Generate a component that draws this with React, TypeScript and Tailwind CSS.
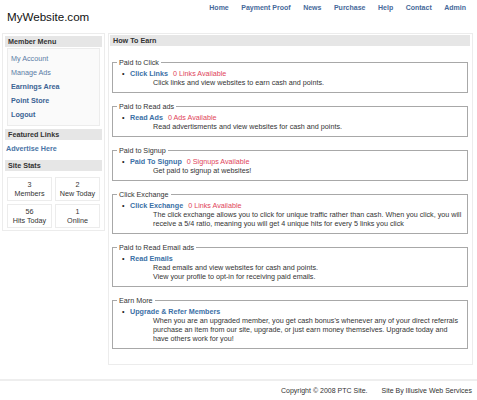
const nav = ['Home', 'Payment Proof', 'News', 'Purchase', 'Help', 'Contact', 'Admin'];

const menu = [
  { label: 'My Account', bold: false },
  { label: 'Manage Ads', bold: false },
  { label: 'Earnings Area', bold: true },
  { label: 'Point Store', bold: true },
  { label: 'Logout', bold: true },
];

const stats = [
  { n: '3', label: 'Members' },
  { n: '2', label: 'New Today' },
  { n: '56', label: 'Hits Today' },
  { n: '1', label: 'Online' },
];

type Earn = { legend: string; link: string; avail?: string; lines: string[] };

const earns: Earn[] = [
  { legend: 'Paid to Click', link: 'Click Links', avail: '0 Links Available', lines: ['Click links and view websites to earn cash and points.'] },
  { legend: 'Paid to Read ads', link: 'Read Ads', avail: '0 Ads Available', lines: ['Read advertisments and view websites for cash and points.'] },
  { legend: 'Paid to Signup', link: 'Paid To Signup', avail: '0 Signups Available', lines: ['Get paid to signup at websites!'] },
  {
    legend: 'Click Exchange',
    link: 'Click Exchange',
    avail: '0 Links Available',
    lines: [
      'The click exchange allows you to click for unique traffic rather than cash. When you click, you will',
      'receive a 5/4 ratio, meaning you will get 4 unique hits for every 5 links you click',
    ],
  },
  {
    legend: 'Paid to Read Email ads',
    link: 'Read Emails',
    lines: ['Read emails and view websites for cash and points.', 'View your profile to opt-in for receiving paid emails.'],
  },
  {
    legend: 'Earn More',
    link: 'Upgrade & Refer Members',
    lines: [
      "When you are an upgraded member, you get cash bonus's whenever any of your direct referrals",
      'purchase an item from our site, upgrade, or just earn money themselves. Upgrade today and',
      'have others work for you!',
    ],
  },
];

function BarTitle({ children }: { children: string }) {
  return (
    <div className="h-[11px] bg-[#e6e6e6] pl-[3px] text-[7.2px] font-bold leading-[11px] text-[#333]">{children}</div>
  );
}

function EarnBox({ e }: { e: Earn }) {
  return (
    <fieldset className="mx-[2px] mt-[9px] border border-[#a8a8a8] pr-[6px] pb-[5px] pl-[9px]">
      <legend className="ml-[-5px] px-[2px] text-[7.2px] leading-[9px] text-[#333]">{e.legend}</legend>
      <div className="mt-[2px] whitespace-nowrap text-[7.2px] leading-[9px]">
        <div className="flex">
          <span className="w-[8px] text-[#222]">•</span>
          <span className="font-bold text-[#3b70a6]">{e.link}</span>
          {e.avail && <span className="ml-[5px] text-[#e0455a]">{e.avail}</span>}
        </div>
        <div className="pl-[31px] text-[#333]">
          {e.lines.map((l) => (
            <div key={l}>{l}</div>
          ))}
        </div>
      </div>
    </fieldset>
  );
}

export default function App() {
  return (
    <div className="h-[400px] w-[477px] overflow-hidden bg-white font-['Liberation_Sans',Arial,sans-serif] text-[#333]">
      <div className="flex h-[33px] justify-between">
        <div className="pt-[10px] pl-[7px] text-[11.6px] leading-[14px] text-[#111]">MyWebsite.com</div>
        <div className="flex gap-[12.5px] pt-[3px] pr-[11px] text-[7px] font-bold leading-[9px] text-[#46699a]">
          {nav.map((n) => (
            <span key={n}>{n}</span>
          ))}
        </div>
      </div>

      <div className="flex items-start gap-[3px] pl-[2px]">
        <div className="w-[103px] border border-[#ececec] p-[2px] pb-[1px]">
          <BarTitle>Member Menu</BarTitle>
          <div className="mx-[2px] mt-[1px] border border-[#ececec] bg-[#fafafa] pt-[3px] pb-[3px]">
            {menu.map((m) => (
              <div
                key={m.label}
                className={
                  m.bold
                    ? 'pl-[3px] text-[7.2px] font-bold leading-[14px] text-[#3b6394]'
                    : 'pl-[3px] text-[7.2px] leading-[14px] text-[#5a7ca6]'
                }
              >
                {m.label}
              </div>
            ))}
          </div>
          <div className="mt-[3px]">
            <BarTitle>Featured Links</BarTitle>
          </div>
          <div className="pt-[4px] pb-[7px] pl-[1px] text-[7.2px] font-bold leading-[9px] text-[#4a74a6]">Advertise Here</div>
          <BarTitle>Site Stats</BarTitle>
          <div className="mt-[6px] mb-[1px] grid grid-cols-2 gap-[3px] px-[2px]">
            {stats.map((s) => (
              <div key={s.label} className="border border-[#ececec] py-[2px] text-center text-[7.2px] leading-[9px] text-[#333]">
                <div>{s.n}</div>
                <div>{s.label}</div>
              </div>
            ))}
          </div>
        </div>

        <div className="h-[332px] w-[365px] border border-[#ececec] p-[1px] pr-[2px]">
          <BarTitle>How To Earn</BarTitle>
          <div className="pt-[3px]">
            {earns.map((e) => (
              <EarnBox key={e.legend} e={e} />
            ))}
          </div>
        </div>
      </div>

      <div className="mt-[14px] h-[2px] bg-[#eeeeee]" />
      <div className="flex justify-end gap-[14px] pt-[5px] pr-[5px] text-[7px] leading-[9px] text-[#333]">
        <span>Copyright © 2008 PTC Site.</span>
        <span>Site By Illusive Web Services</span>
      </div>
    </div>
  );
}
